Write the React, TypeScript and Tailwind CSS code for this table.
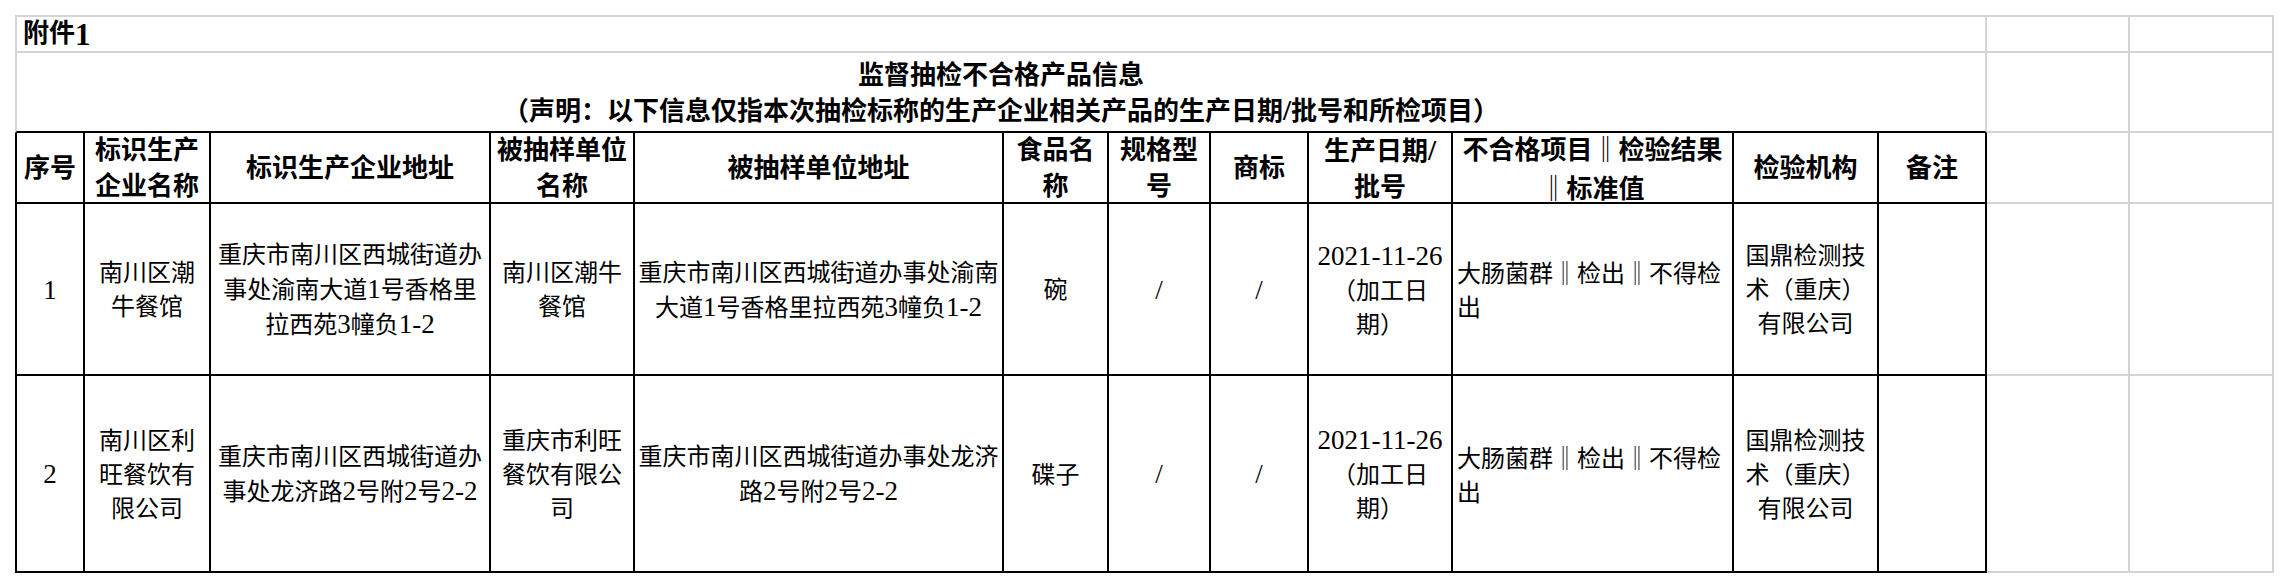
const gray = 'border-[#d4d4d4]'

const headers: string[][] = [
  ['序号'],
  ['标识生产', '企业名称'],
  ['标识生产企业地址'],
  ['被抽样单位', '名称'],
  ['被抽样单位地址'],
  ['食品名', '称'],
  ['规格型', '号'],
  ['商标'],
  ['生产日期/', '批号'],
  ['不合格项目‖检验结果', '‖标准值'],
  ['检验机构'],
  ['备注'],
]

const rows: string[][][] = [
  [
    ['1'],
    ['南川区潮', '牛餐馆'],
    ['重庆市南川区西城街道办', '事处渝南大道1号香格里', '拉西苑3幢负1-2'],
    ['南川区潮牛', '餐馆'],
    ['重庆市南川区西城街道办事处渝南', '大道1号香格里拉西苑3幢负1-2'],
    ['碗'],
    ['/'],
    ['/'],
    ['2021-11-26', '（加工日', '期）'],
    ['大肠菌群‖检出‖不得检', '出'],
    ['国鼎检测技', '术（重庆）', '有限公司'],
    [],
  ],
  [
    ['2'],
    ['南川区利', '旺餐饮有', '限公司'],
    ['重庆市南川区西城街道办', '事处龙济路2号附2号2-2'],
    ['重庆市利旺', '餐饮有限公', '司'],
    ['重庆市南川区西城街道办事处龙济', '路2号附2号2-2'],
    ['碟子'],
    ['/'],
    ['/'],
    ['2021-11-26', '（加工日', '期）'],
    ['大肠菌群‖检出‖不得检', '出'],
    ['国鼎检测技', '术（重庆）', '有限公司'],
    [],
  ],
]

// split a line so latin runs and the double bar get their own styling
function Line({ text, latin }: { text: string; latin: string }) {
  const parts = text.split(/(‖|[\x21-\x7e]+)/).filter(Boolean)
  return (
    <div className="whitespace-nowrap">
      {parts.map((p, i) =>
        p === '‖' ? (
          <span key={i} className="inline-block w-[1em] text-center font-['Noto_Sans_CJK_SC',sans-serif]">
            ‖
          </span>
        ) : /^[\x21-\x7e]+$/.test(p) ? (
          <span key={i} className={latin}>
            {p}
          </span>
        ) : (
          <span key={i}>{p}</span>
        ),
      )}
    </div>
  )
}

function GrayCells({ top }: { top?: boolean }) {
  return (
    <>
      <div className={`border-r-2 border-b-2 ${gray} ${top ? 'border-t-2' : ''}`} />
      <div className={`border-r-2 border-b-2 ${gray} ${top ? 'border-t-2' : ''}`} />
    </>
  )
}

export default function App() {
  return (
    <div className="min-h-[588px] bg-white pl-[15px] pt-[15px] font-['Liberation_Serif','Noto_Sans_CJK_SC',serif] text-black">
      <div className="grid w-max grid-cols-[70px_126px_280px_144px_369px_105px_102px_98px_144px_281px_145px_108px_143px_144px] grid-rows-[38px_80px_71px_172px_197px]">
        {/* 附件 row */}
        <div
          className={`col-span-12 flex items-center border-t-2 border-r-2 border-b-2 border-l-2 ${gray} pl-[6px] text-[26px] leading-none font-bold`}
        >
          附件<span className="text-[31px]">1</span>
        </div>
        <GrayCells top />

        {/* title row */}
        <div
          className={`col-span-12 flex flex-col items-center justify-center border-r-2 border-b-2 border-l-2 ${gray} border-b-black pt-[3px] text-[26px] leading-[35px] font-bold`}
        >
          <div>监督抽检不合格产品信息</div>
          <div>
            （声明：以下信息仅指本次抽检标称的生产企业相关产品的生产日期<span className="text-[29px]">/</span>
            批号和所检项目）
          </div>
        </div>
        <GrayCells />

        {/* header row */}
        {headers.map((h, i) => (
          <div
            key={i}
            className={`flex items-center justify-center border-r-2 border-b-2 border-black pt-[2px] text-center text-[26px] leading-[36px] font-bold ${
              i === 0 ? 'border-l-2' : ''
            }`}
          >
            <div>
              {h.map((l, j) => (
                <Line key={j} text={l} latin="text-[29px]" />
              ))}
            </div>
          </div>
        ))}
        <GrayCells />

        {/* data rows */}
        {rows.map((row, r) => (
          <div key={r} className="contents">
            {row.map((cell, i) => (
              <div
                key={i}
                className={`flex items-center border-r-2 border-b-2 border-black pt-[2px] text-[24px] leading-[34px] ${
                  i === 0 ? 'border-l-2' : ''
                } ${i === 9 ? 'justify-start pl-[4px] text-left' : 'justify-center text-center'}`}
              >
                <div>
                  {cell.map((l, j) => (
                    <Line key={j} text={l} latin="text-[27px]" />
                  ))}
                </div>
              </div>
            ))}
            <GrayCells />
          </div>
        ))}
      </div>
    </div>
  )
}
